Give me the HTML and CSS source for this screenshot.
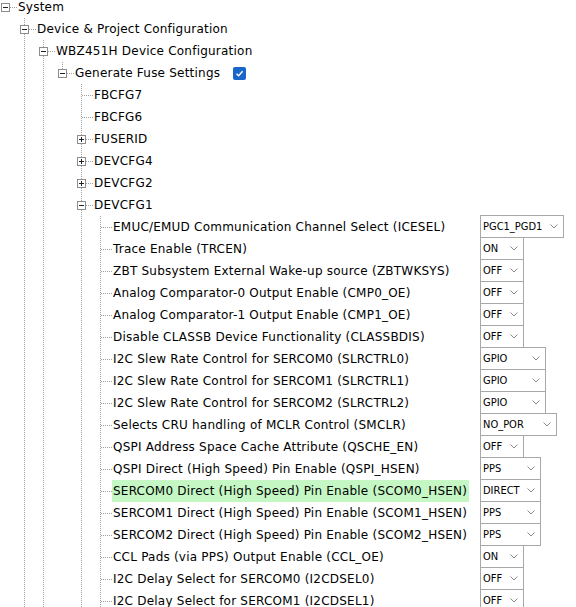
FILE: index.html
```html
<!DOCTYPE html>
<html>
<head>
<meta charset="utf-8">
<link rel="stylesheet" href="styles.css">
</head>
<body>
<div class="tree">
  <div class="row"><div class="node"><span class="c n root"><span class="box minus"></span></span><span class="label">System</span></div></div>
  <div class="row"><div class="node"><span class="c e"></span><span class="c n tee"><span class="box minus"></span></span><span class="label">Device &amp; Project Configuration</span></div></div>
  <div class="row"><div class="node"><span class="c e"></span><span class="c v"></span><span class="c n tee"><span class="box minus"></span></span><span class="label">WBZ451H Device Configuration</span></div></div>
  <div class="row"><div class="node"><span class="c e"></span><span class="c v"></span><span class="c v"></span><span class="c n elbow"><span class="box minus"></span></span><span class="label">Generate Fuse Settings</span><span class="check"><svg width="13" height="13" viewBox="0 0 13 13"><path d="M3.5 6.8 L5.6 8.8 L9.6 4.3" fill="none" stroke="#fff" stroke-width="1.4"/></svg></span></div></div>
  <div class="row"><div class="node"><span class="c e"></span><span class="c v"></span><span class="c v"></span><span class="c e"></span><span class="c n tee"></span><span class="label">FBCFG7</span></div></div>
  <div class="row"><div class="node"><span class="c e"></span><span class="c v"></span><span class="c v"></span><span class="c e"></span><span class="c n tee"></span><span class="label">FBCFG6</span></div></div>
  <div class="row"><div class="node"><span class="c e"></span><span class="c v"></span><span class="c v"></span><span class="c e"></span><span class="c n tee"><span class="box plus"></span></span><span class="label">FUSERID</span></div></div>
  <div class="row"><div class="node"><span class="c e"></span><span class="c v"></span><span class="c v"></span><span class="c e"></span><span class="c n tee"><span class="box plus"></span></span><span class="label">DEVCFG4</span></div></div>
  <div class="row"><div class="node"><span class="c e"></span><span class="c v"></span><span class="c v"></span><span class="c e"></span><span class="c n tee"><span class="box plus"></span></span><span class="label">DEVCFG2</span></div></div>
  <div class="row"><div class="node"><span class="c e"></span><span class="c v"></span><span class="c v"></span><span class="c e"></span><span class="c n tee"><span class="box minus"></span></span><span class="label">DEVCFG1</span></div></div>

  <div class="row"><div class="node"><span class="c e"></span><span class="c v"></span><span class="c v"></span><span class="c e"></span><span class="c v"></span><span class="c n tee"></span><span class="label">EMUC/EMUD Communication Channel Select (ICESEL)</span></div><div class="sel w84"><span>PGC1_PGD1</span><svg class="chev" width="8" height="5" viewBox="0 0 8 5"><polyline points="0.5,0.5 4,4 7.5,0.5" fill="none" stroke="#8a8a8a"/></svg></div></div>
  <div class="row"><div class="node"><span class="c e"></span><span class="c v"></span><span class="c v"></span><span class="c e"></span><span class="c v"></span><span class="c n tee"></span><span class="label">Trace Enable (TRCEN)</span></div><div class="sel w44"><span>ON</span><svg class="chev" width="8" height="5" viewBox="0 0 8 5"><polyline points="0.5,0.5 4,4 7.5,0.5" fill="none" stroke="#8a8a8a"/></svg></div></div>
  <div class="row"><div class="node"><span class="c e"></span><span class="c v"></span><span class="c v"></span><span class="c e"></span><span class="c v"></span><span class="c n tee"></span><span class="label">ZBT Subsystem External Wake-up source (ZBTWKSYS)</span></div><div class="sel w44"><span>OFF</span><svg class="chev" width="8" height="5" viewBox="0 0 8 5"><polyline points="0.5,0.5 4,4 7.5,0.5" fill="none" stroke="#8a8a8a"/></svg></div></div>
  <div class="row"><div class="node"><span class="c e"></span><span class="c v"></span><span class="c v"></span><span class="c e"></span><span class="c v"></span><span class="c n tee"></span><span class="label">Analog Comparator-0 Output Enable (CMP0_OE)</span></div><div class="sel w44"><span>OFF</span><svg class="chev" width="8" height="5" viewBox="0 0 8 5"><polyline points="0.5,0.5 4,4 7.5,0.5" fill="none" stroke="#8a8a8a"/></svg></div></div>
  <div class="row"><div class="node"><span class="c e"></span><span class="c v"></span><span class="c v"></span><span class="c e"></span><span class="c v"></span><span class="c n tee"></span><span class="label">Analog Comparator-1 Output Enable (CMP1_OE)</span></div><div class="sel w44"><span>OFF</span><svg class="chev" width="8" height="5" viewBox="0 0 8 5"><polyline points="0.5,0.5 4,4 7.5,0.5" fill="none" stroke="#8a8a8a"/></svg></div></div>
  <div class="row"><div class="node"><span class="c e"></span><span class="c v"></span><span class="c v"></span><span class="c e"></span><span class="c v"></span><span class="c n tee"></span><span class="label">Disable CLASSB Device Functionality (CLASSBDIS)</span></div><div class="sel w44"><span>OFF</span><svg class="chev" width="8" height="5" viewBox="0 0 8 5"><polyline points="0.5,0.5 4,4 7.5,0.5" fill="none" stroke="#8a8a8a"/></svg></div></div>
  <div class="row"><div class="node"><span class="c e"></span><span class="c v"></span><span class="c v"></span><span class="c e"></span><span class="c v"></span><span class="c n tee"></span><span class="label">I2C Slew Rate Control for SERCOM0 (SLRCTRL0)</span></div><div class="sel w66"><span>GPIO</span><svg class="chev" width="8" height="5" viewBox="0 0 8 5"><polyline points="0.5,0.5 4,4 7.5,0.5" fill="none" stroke="#8a8a8a"/></svg></div></div>
  <div class="row"><div class="node"><span class="c e"></span><span class="c v"></span><span class="c v"></span><span class="c e"></span><span class="c v"></span><span class="c n tee"></span><span class="label">I2C Slew Rate Control for SERCOM1 (SLRCTRL1)</span></div><div class="sel w66"><span>GPIO</span><svg class="chev" width="8" height="5" viewBox="0 0 8 5"><polyline points="0.5,0.5 4,4 7.5,0.5" fill="none" stroke="#8a8a8a"/></svg></div></div>
  <div class="row"><div class="node"><span class="c e"></span><span class="c v"></span><span class="c v"></span><span class="c e"></span><span class="c v"></span><span class="c n tee"></span><span class="label">I2C Slew Rate Control for SERCOM2 (SLRCTRL2)</span></div><div class="sel w66"><span>GPIO</span><svg class="chev" width="8" height="5" viewBox="0 0 8 5"><polyline points="0.5,0.5 4,4 7.5,0.5" fill="none" stroke="#8a8a8a"/></svg></div></div>
  <div class="row"><div class="node"><span class="c e"></span><span class="c v"></span><span class="c v"></span><span class="c e"></span><span class="c v"></span><span class="c n tee"></span><span class="label">Selects CRU handling of MCLR Control (SMCLR)</span></div><div class="sel w77"><span>NO_POR</span><svg class="chev" width="8" height="5" viewBox="0 0 8 5"><polyline points="0.5,0.5 4,4 7.5,0.5" fill="none" stroke="#8a8a8a"/></svg></div></div>
  <div class="row"><div class="node"><span class="c e"></span><span class="c v"></span><span class="c v"></span><span class="c e"></span><span class="c v"></span><span class="c n tee"></span><span class="label">QSPI Address Space Cache Attribute (QSCHE_EN)</span></div><div class="sel w44"><span>OFF</span><svg class="chev" width="8" height="5" viewBox="0 0 8 5"><polyline points="0.5,0.5 4,4 7.5,0.5" fill="none" stroke="#8a8a8a"/></svg></div></div>
  <div class="row"><div class="node"><span class="c e"></span><span class="c v"></span><span class="c v"></span><span class="c e"></span><span class="c v"></span><span class="c n tee"></span><span class="label">QSPI Direct (High Speed) Pin Enable (QSPI_HSEN)</span></div><div class="sel w61"><span>PPS</span><svg class="chev" width="8" height="5" viewBox="0 0 8 5"><polyline points="0.5,0.5 4,4 7.5,0.5" fill="none" stroke="#8a8a8a"/></svg></div></div>
  <div class="row"><div class="node"><span class="c e"></span><span class="c v"></span><span class="c v"></span><span class="c e"></span><span class="c v"></span><span class="c n tee"></span><span class="label hl">SERCOM0 Direct (High Speed) Pin Enable (SCOM0_HSEN)</span></div><div class="sel w61"><span>DIRECT</span><svg class="chev" width="8" height="5" viewBox="0 0 8 5"><polyline points="0.5,0.5 4,4 7.5,0.5" fill="none" stroke="#8a8a8a"/></svg></div></div>
  <div class="row"><div class="node"><span class="c e"></span><span class="c v"></span><span class="c v"></span><span class="c e"></span><span class="c v"></span><span class="c n tee"></span><span class="label">SERCOM1 Direct (High Speed) Pin Enable (SCOM1_HSEN)</span></div><div class="sel w61"><span>PPS</span><svg class="chev" width="8" height="5" viewBox="0 0 8 5"><polyline points="0.5,0.5 4,4 7.5,0.5" fill="none" stroke="#8a8a8a"/></svg></div></div>
  <div class="row"><div class="node"><span class="c e"></span><span class="c v"></span><span class="c v"></span><span class="c e"></span><span class="c v"></span><span class="c n tee"></span><span class="label">SERCOM2 Direct (High Speed) Pin Enable (SCOM2_HSEN)</span></div><div class="sel w61"><span>PPS</span><svg class="chev" width="8" height="5" viewBox="0 0 8 5"><polyline points="0.5,0.5 4,4 7.5,0.5" fill="none" stroke="#8a8a8a"/></svg></div></div>
  <div class="row"><div class="node"><span class="c e"></span><span class="c v"></span><span class="c v"></span><span class="c e"></span><span class="c v"></span><span class="c n tee"></span><span class="label">CCL Pads (via PPS) Output Enable (CCL_OE)</span></div><div class="sel w44"><span>ON</span><svg class="chev" width="8" height="5" viewBox="0 0 8 5"><polyline points="0.5,0.5 4,4 7.5,0.5" fill="none" stroke="#8a8a8a"/></svg></div></div>
  <div class="row"><div class="node"><span class="c e"></span><span class="c v"></span><span class="c v"></span><span class="c e"></span><span class="c v"></span><span class="c n tee"></span><span class="label">I2C Delay Select for SERCOM0 (I2CDSEL0)</span></div><div class="sel w44"><span>OFF</span><svg class="chev" width="8" height="5" viewBox="0 0 8 5"><polyline points="0.5,0.5 4,4 7.5,0.5" fill="none" stroke="#8a8a8a"/></svg></div></div>
  <div class="row"><div class="node"><span class="c e"></span><span class="c v"></span><span class="c v"></span><span class="c e"></span><span class="c v"></span><span class="c n tee"></span><span class="label">I2C Delay Select for SERCOM1 (I2CDSEL1)</span></div><div class="sel w44"><span>OFF</span><svg class="chev" width="8" height="5" viewBox="0 0 8 5"><polyline points="0.5,0.5 4,4 7.5,0.5" fill="none" stroke="#8a8a8a"/></svg></div></div>
</div>
</body>
</html>
```

FILE: styles.css
```css
html, body {
  margin: 0;
  padding: 0;
  background: #fff;
  overflow: hidden;
}
.tree {
  margin-top: -4px;
  font-family: "DejaVu Sans", Verdana, sans-serif;
  font-size: 12px;
  letter-spacing: 0.22px;
  color: #000;
}
.row {
  display: grid;
  grid-template-columns: 480px auto;
  height: 22px;
  align-items: start;
}
.node {
  display: flex;
  align-items: center;
  height: 22px;
  white-space: nowrap;
}
.c {
  position: relative;
  flex: none;
  width: 19px;
  height: 22px;
}
.c.n {
  width: 17px;
}
.v::before, .tee::before, .elbow::before {
  content: "";
  position: absolute;
  left: 5px;
  top: 0;
  width: 1px;
  height: 22px;
  background-image: linear-gradient(to bottom, #a0a0a0 50%, transparent 50%);
  background-size: 1px 2px;
}
.elbow::before {
  height: 12px;
}
.n::after {
  content: "";
  position: absolute;
  left: 6px;
  top: 11px;
  width: 11px;
  height: 1px;
  background-image: linear-gradient(to right, #a0a0a0 50%, transparent 50%);
  background-size: 2px 1px;
}
.box {
  position: absolute;
  left: 1px;
  top: 7px;
  width: 9px;
  height: 9px;
  box-sizing: border-box;
  border: 1px solid #8c8c8c;
  background: #fff;
  z-index: 1;
}
.box::before {
  content: "";
  position: absolute;
  left: 1px;
  top: 3px;
  width: 5px;
  height: 1px;
  background: #222;
}
.box.plus::after {
  content: "";
  position: absolute;
  left: 3px;
  top: 1px;
  width: 1px;
  height: 5px;
  background: #222;
}
.label {
  padding: 0 2px 0 1px;
  line-height: 22px;
  height: 22px;
}
.label.hl {
  background: #c4f7c4;
}
.check {
  display: inline-flex;
  width: 13px;
  height: 13px;
  margin-left: 11px;
  border-radius: 2px;
  background: #1866c9;
}
.sel {
  box-sizing: border-box;
  height: 23px;
  margin-top: -1px;
  border: 1px solid #a8a8a8;
  background: #fff;
  display: flex;
  align-items: center;
  justify-content: space-between;
  padding: 0 5px 0 2px;
  font-family: "DejaVu Sans Condensed", "Liberation Sans Narrow", "DejaVu Sans", sans-serif;
  font-stretch: condensed;
  font-size: 11px;
  letter-spacing: 0;
  color: #000;
}
.chev {
  flex: none;
}
.w84 { width: 84px; }
.w44 { width: 44px; }
.w66 { width: 66px; }
.w77 { width: 77px; }
.w61 { width: 61px; }
```
